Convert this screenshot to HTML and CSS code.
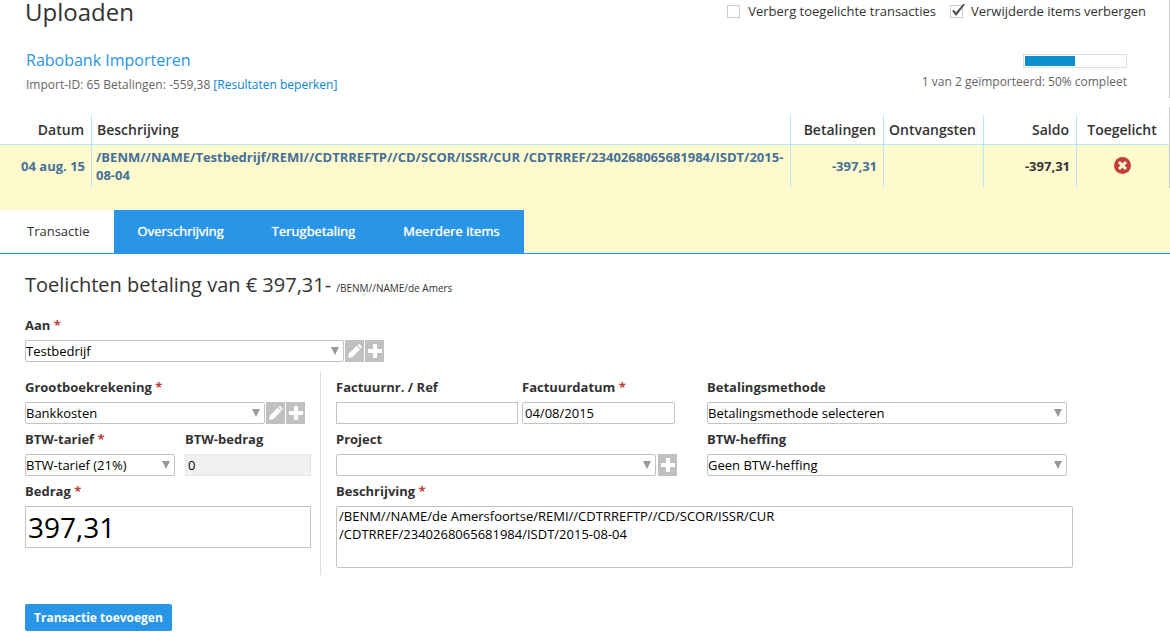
FILE: index.html
```html
<!DOCTYPE html>
<html lang="nl">
<head>
<meta charset="utf-8">
<title>Uploaden</title>
<link rel="stylesheet" href="styles.css">
</head>
<body>
<svg class="sprite" aria-hidden="true">
  <symbol id="pencil" viewBox="0 0 14 14"><path d="M0 14 1 9.500 8.700 1.700 12.200 5.200 4.500 13zM9.500 1 10.300.3Q11 0 11.700.5L13.500 2.300Q14 3 13.500 3.700L12.900 4.400z"/></symbol>
  <symbol id="plus" viewBox="0 0 14 14"><path d="M5 0H9V5H14V9H9V14H5V9H0V5H5z"/></symbol>
  <symbol id="cross" viewBox="0 0 17 17"><circle cx="8.500" cy="8.500" r="8.500" fill="#c13c3c"/><path d="M5 5 12 12M12 5 5 12" stroke="#fffad0" stroke-width="3"/></symbol>
</svg>
<header class="panel top">
  <div class="title-row">
    <h1>Uploaden</h1>
    <div class="filters">
      <label><input type="checkbox">Verberg toegelichte transacties</label>
      <label><input type="checkbox" checked>Verwijderde items verbergen</label>
    </div>
  </div>
  <div class="import-row">
    <div>
      <h2>Rabobank Importeren</h2>
      <p>Import-ID: 65 Betalingen: -559,38 <a href="#">[Resultaten beperken]</a></p>
    </div>
    <div class="status">
      <div class="bar" role="progressbar" aria-label="Import" aria-valuenow="50"><div class="fill" style="width:50%"></div></div>
      <p>1 van 2 geïmporteerd: 50% compleet</p>
    </div>
  </div>
</header>
<main>
  <section class="panel list">
    <table>
      <colgroup><col class="c-date"><col><col class="c-pay"><col class="c-rec"><col class="c-pay"><col class="c-mark"></colgroup>
      <thead><tr><th class="num">Datum</th><th>Beschrijving</th><th class="num">Betalingen</th><th class="num">Ontvangsten</th><th class="num">Saldo</th><th class="mid">Toegelicht</th></tr></thead>
      <tbody><tr>
        <td class="num">04 aug. 15</td>
        <td>/BENM//NAME/Testbedrijf/REMI//CDTRREFTP//CD/SCOR/ISSR/CUR /CDTRREF/2340268065681984/ISDT/2015-<wbr>08-04</td>
        <td class="num">-397,31</td><td></td><td class="num dark">-397,31</td>
        <td class="mid"><svg class="cross" role="img" aria-label="Niet toegelicht"><use href="#cross"/></svg></td>
      </tr></tbody>
    </table>
    <nav class="tabs">
      <button class="tab active" type="button">Transactie</button>
      <button class="tab" type="button">Overschrijving</button>
      <button class="tab" type="button">Terugbetaling</button>
      <button class="tab" type="button">Meerdere items</button>
    </nav>
  </section>
  <form class="form">
    <h2>Toelichten betaling van € 397,31- <small>/BENM//NAME/de Amers</small></h2>
    <div class="field payee">
      <label for="aan">Aan <i>*</i></label>
      <div class="control"><span class="select"><select id="aan"><option>Testbedrijf</option></select></span><button class="icon" type="button" aria-label="Bewerken"><svg><use href="#pencil"/></svg></button><button class="icon" type="button" aria-label="Toevoegen"><svg><use href="#plus"/></svg></button></div>
    </div>
    <div class="columns">
      <div class="left">
        <div class="field account">
          <label for="rek">Grootboekrekening <i>*</i></label>
          <div class="control"><span class="select"><select id="rek"><option>Bankkosten</option></select></span><button class="icon" type="button" aria-label="Bewerken"><svg><use href="#pencil"/></svg></button><button class="icon" type="button" aria-label="Toevoegen"><svg><use href="#plus"/></svg></button></div>
        </div>
        <div class="vat">
          <div class="field"><label for="tarief">BTW-tarief <i>*</i></label><span class="select"><select id="tarief"><option>BTW-tarief (21%)</option></select></span></div>
          <div class="field"><label for="btw">BTW-bedrag</label><input id="btw" class="locked" value="0" readonly></div>
        </div>
        <div class="field"><label for="bedrag">Bedrag <i>*</i></label><input id="bedrag" class="amount" value="397,31"></div>
      </div>
      <div class="right">
        <div class="invoice">
          <div class="field"><label for="ref">Factuurnr. / Ref</label><input id="ref"></div>
          <div class="field"><label for="datum">Factuurdatum <i>*</i></label><input id="datum" class="round" value="04/08/2015"></div>
        </div>
        <div class="field method"><label for="methode">Betalingsmethode</label><span class="select"><select id="methode"><option>Betalingsmethode selecteren</option></select></span></div>
        <div class="field">
          <label for="project">Project</label>
          <div class="control project"><span class="select"><select id="project"><option></option></select></span><button class="icon" type="button" aria-label="Toevoegen"><svg><use href="#plus"/></svg></button></div>
        </div>
        <div class="field method"><label for="heffing">BTW-heffing</label><span class="select"><select id="heffing"><option>Geen BTW-heffing</option></select></span></div>
        <div class="field wide"><label for="oms">Beschrijving <i>*</i></label><textarea id="oms">/BENM//NAME/de Amersfoortse/REMI//CDTRREFTP//CD/SCOR/ISSR/CUR
/CDTRREF/2340268065681984/ISDT/2015-08-04</textarea></div>
      </div>
    </div>
    <button class="submit" type="button">Transactie toevoegen</button>
  </form>
</main>
</body>
</html>
```

FILE: styles.css
```css
* { box-sizing: border-box; }
body { margin: 0; background: #fff; color: #333; font: 13px/18px "Open Sans", sans-serif; }
h1, h2, p { margin: 0; font-weight: 400; }
button, input, select, textarea { margin: 0; font: inherit; }
.sprite { display: none; }
.panel { border-right: 1px solid #ccc; }

.title-row { display: flex; justify-content: space-between; padding: 0 23px 0 25px; }
h1 { font-size: 24px; line-height: 24px; }
.filters { display: flex; align-items: flex-start; gap: 14px; padding-top: 2px; }
.filters label { display: flex; align-items: center; gap: 8px; }
.filters input { appearance: none; width: 13px; height: 13px; border: 1px solid #ccc; background: #fff; position: relative; }
.filters input:checked::after { content: ""; position: absolute; left: 0; top: -2px; width: 14px; height: 13px; background: #555; clip-path: polygon(8% 58%, 20% 48%, 36% 68%, 90% 0, 100% 8%, 40% 92%, 32% 92%); }
.import-row { display: flex; justify-content: space-between; padding: 24px 42px 0 26px; font-size: 12px; color: #666; }
.import-row h2 { font-size: 16px; line-height: 24px; color: #2895e7; }
.import-row p { line-height: 26px; }
a { color: #0a84d8; text-decoration: none; }
.status { display: flex; flex-direction: column; align-items: flex-end; padding-top: 6px; }
.status p { line-height: 28px; }
.bar { width: 104px; height: 14px; border: 1px solid #ddd; padding: 1px; }
.fill { height: 100%; background: #088fcc; }

.list { margin-top: 9px; padding-top: 8px; }
table { width: 100%; table-layout: fixed; border-collapse: separate; border-spacing: 0; }
.c-date { width: 92px; }
.c-pay { width: 93px; }
.c-rec { width: 100px; }
.c-mark { width: 92px; }
th { height: 30px; padding: 0 7px 0 5px; border-bottom: 1px solid #b5e5f8; font-size: 14px; font-weight: 600; text-align: left; }
td { height: 43px; padding: 2px 6px 3px 4px; color: #44709a; font-weight: 700; }
th:not(:last-child), td:not(:last-child) { border-right: 1px solid #b5e5f8; }
.num { text-align: right; }
.mid { text-align: center; }
.dark { color: #333; }
.cross { width: 17px; height: 17px; display: block; margin: 0 auto 2px; }
tbody { background: #fffacd; }
.tabs { display: flex; margin-right: -1px; padding-top: 22px; border-bottom: 1px solid #2895e7; background: #fffacd; }
.tab { border: 0; padding: 0 24px 2px; height: 43px; background: #2895e7; color: #fff; text-shadow: 0 0 1px #fff; }
.tab.active { background: #fff; color: #333; text-shadow: none; padding-left: 27px; }

.form { padding: 16px 25px 0; }
.form h2 { font-size: 20px; line-height: 30px; }
.form small { font-size: 10px; }
.field { display: flex; flex-direction: column; min-width: 0; }
.field label { line-height: 30px; font-weight: 700; }
.field i { color: #b94040; font-style: normal; }
.control { display: flex; gap: 1px; }
.select { position: relative; display: block; flex: 1; min-width: 0; }
.select::after { content: ""; position: absolute; right: 5px; top: 7px; width: 8px; height: 8px; background: #999; clip-path: polygon(0 0, 100% 0, 50% 100%); pointer-events: none; }
select, input, textarea { width: 100%; height: 22px; border: 1px solid #c4c4c4; background: #fff; color: #000; outline: 0; border-radius: 0; }
select { appearance: none; display: block; padding: 0; border-radius: 2px; line-height: 20px; }
input { padding: 0 2px; }
.round { border-radius: 2px; }
.icon { width: 19px; height: 22px; padding: 0; border: 0; background: #c0c0c0; display: grid; place-items: center; }
.icon svg { width: 14px; height: 14px; fill: #fff; }
.payee { width: 359px; padding-top: 7px; }
.columns { display: grid; grid-template-columns: 296px minmax(0, 1fr); margin-top: 10px; }
.left { border-right: 1px solid #ddd; padding: 0 9px 27px 0; }
.account { width: 280px; }
.vat { display: grid; grid-template-columns: 150px 1fr; gap: 10px; }
.locked { background: #f1f1f1; border-color: #e6e6e6; }
.amount { height: 42px; font-size: 28px; }
.right { display: grid; grid-template-columns: 341fr 366fr; column-gap: 30px; align-content: start; padding: 0 72px 0 15px; }
.invoice { display: grid; grid-template-columns: 182fr 153fr; gap: 4px; padding-right: 2px; }
.method { padding-right: 6px; }
.project { gap: 2px; }
.wide { grid-column: 1 / -1; }
textarea { height: 62px; padding: 0 2px; resize: none; border-radius: 2px; display: block; }
.submit { display: block; margin-top: 29px; height: 27px; padding: 0 9px; border: 0; border-radius: 2px; background: #2895e7; color: #fff; font-size: 12px; font-weight: 700; }
```
